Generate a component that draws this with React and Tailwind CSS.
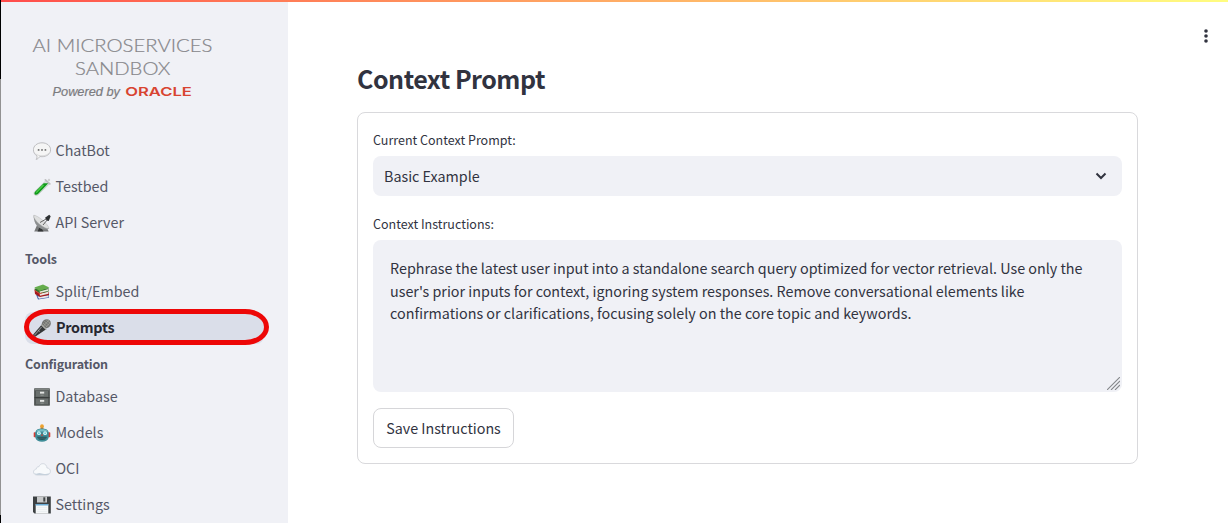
import React from "react";

function ChatIcon() {
  return (
    <svg viewBox="0 0 18 18" className="h-[18px] w-[18px] shrink-0">
      <path d="M9 .8c4.900 0 8.600 3.100 8.600 7s-3.700 6.900-8.600 6.900c-.8 0-1.500-.1-2.200-.2-.8 1.300-2 2.500-3.700 2.900.8-1.100 1-2.200.8-3.600C1.800 12.600.4 10.400.4 7.800.4 3.900 4.100.8 9 .8z" fill="#f5f5f5" stroke="#b0b0b2" strokeWidth=".8" />
      <path d="M2.500 11.500c1.500 1.700 4 2.300 6.500 2.300 3 0 5.800-1 7.200-3" fill="none" stroke="#d2d2d3" strokeWidth=".8" />
      <circle cx="5.600" cy="7.900" r=".95" fill="#6d6d6d" />
      <circle cx="9" cy="7.900" r=".95" fill="#6d6d6d" />
      <circle cx="12.400" cy="7.900" r=".95" fill="#6d6d6d" />
    </svg>
  );
}

function TubeIcon() {
  return (
    <svg viewBox="0 0 18 18" className="h-[18px] w-[18px] shrink-0">
      <path d="M12.700 2.800 16.400 5.900 5.200 16.700c-1.200.9-2.800 1-3.700.1-.8-.9-.7-2.300.4-3.400z" fill="#d5dfd9" stroke="#b4bbb8" strokeWidth=".5" />
      <path d="M10.700 5.200h4.600L5 16.100c-1.100.9-2.400 1-3.100.3-.7-.8-.5-1.900.4-3z" fill="#109a1b" />
      <path d="M10.500 7 3.200 14.700" stroke="#4ed04a" strokeWidth="1.200" />
      <path d="m12.400 1.900 4.400 4" stroke="#bdbdbf" strokeWidth="1.700" strokeLinecap="round" />
      <circle cx="16" cy="1.900" r="1.200" fill="#d0d0d2" />
    </svg>
  );
}

function DishIcon() {
  return (
    <svg viewBox="0 0 18 18" className="h-[18px] w-[18px] shrink-0">
      <path d="m5 9-3.800 8.500h14.500L12 10z" fill="#77797a" />
      <path d="m7 12-2.500 5.500h6z" fill="#343637" />
      <path d="M.8 1.300C.2 6.500 3 12.700 8 14.800c3 1.200 6.400.9 8-.4z" fill="#8d9091" />
      <path d="M.8 1.300c3-.7 15 9.200 15.200 13.100C12.500 16-.7 6 .8 1.300z" fill="#dedfdf" stroke="#aaa" strokeWidth=".4" />
      <path d="m7 8.500 7-4M10 11l5-6" stroke="#555" strokeWidth=".9" />
      <path d="m12 3.700 4.200-3 1.500 1.500-2 4.800-1.800-.5z" fill="#2d3032" />
    </svg>
  );
}

function BooksIcon() {
  return (
    <svg viewBox="0 0 18 18" className="h-[18px] w-[18px] shrink-0">
      <path d="m3 11.500 2 5 11-1.800v-3.200z" fill="#3d5ca7" />
      <path d="m4.500 13.500 11-1.300v2L6 15.800z" fill="#e9e9ec" />
      <path d="M1.500 6.500 2 11l5 3 9-2V9z" fill="#a5191d" />
      <path d="m6.600 10.500 8.900-1.800v2L7 12.700z" fill="#ece6e1" />
      <path d="M1.600 5.500 2 7.600l5 3.200 9-2.600-.4-3z" fill="#33702c" />
      <path d="m6.500 8.400 9-2.400v1.700L7 10z" fill="#e7eadd" />
      <path d="m1.300 4.400 8.700-3 6.300 3L6.700 8z" fill="#65ad4c" />
      <path d="m1.500 7.200 5.200 3.400 3-.8" fill="none" stroke="#ef5044" strokeWidth=".8" />
    </svg>
  );
}

function MicIcon() {
  return (
    <svg viewBox="0 0 18 18" className="h-[18px] w-[18px] shrink-0">
      <path d="M8.600 5.800 13.200 10.200 2.200 17.800.4 17.600l-.2-2z" fill="#353738" />
      <path d="M8.600 8 1.400 16.300" stroke="#85878a" strokeWidth="1.100" />
      <ellipse cx="13.300" cy="4.700" rx="4.800" ry="4.300" transform="rotate(-42 13.300 4.700)" fill="#737472" />
      <path d="m10 4 4.500 4M11.300 2.300l5 4.200M13.300 1.200l4 3M10.500 7l5.500-6M13 8l4.500-4.800" stroke="#b5b5ab" strokeWidth=".5" />
      <path d="m8.300 5.600 5.100 4.800" stroke="#acaca6" strokeWidth="1.400" />
      <path d="m5.400 11.600 1.100.8" stroke="#ddd" strokeWidth=".8" />
    </svg>
  );
}

function CabinetIcon() {
  return (
    <svg viewBox="0 0 18 18" className="h-[18px] w-[18px] shrink-0">
      <rect x="1.100" y=".3" width="15.800" height="17.400" rx=".6" fill="#505554" />
      <path d="M1.500 .8h15v1.500h-15z" fill="#7d8280" />
      <rect x="3" y="3" width="12" height="5.800" fill="#6a706e" />
      <rect x="3" y="10.500" width="12" height="5.800" fill="#6a706e" />
      <rect x="7" y="3.700" width="4.200" height="1.900" fill="#e4e6e5" />
      <rect x="7" y="11.900" width="4.200" height="1.900" fill="#e4e6e5" />
      <path d="M7.500 7.200h3.200M7.500 15.200h3.200" stroke="#9ca09e" strokeWidth=".7" />
      <path d="M1.500 9.600h15" stroke="#343837" strokeWidth=".9" />
    </svg>
  );
}

function RobotIcon() {
  return (
    <svg viewBox="0 0 18 18" className="h-[18px] w-[18px] shrink-0">
      <circle cx="9" cy="2.200" r="1.900" fill="#eda22f" />
      <path d="M7.500 3.600h3v2h-3z" fill="#b87e33" />
      <rect x=".7" y="8.300" width="2.300" height="5" rx=".8" fill="#d83d35" />
      <rect x="15" y="8.300" width="2.300" height="5" rx=".8" fill="#d83d35" />
      <path d="M2.300 8.200C3 5.700 5.400 4.600 9 4.600s6 1.100 6.700 3.600v5.300c-.7 2.900-3.400 4.200-6.700 4.200s-6-1.300-6.700-4.200z" fill="#3f8d98" />
      <path d="M3.300 7.400C4.400 5.600 6.500 5.200 9 5.200s4.600.4 5.700 2.200z" fill="#76bec7" />
      <circle cx="5.900" cy="9.200" r="1.900" fill="#d7f6f8" />
      <circle cx="12.100" cy="9.200" r="1.900" fill="#d7f6f8" />
      <circle cx="5.900" cy="9.200" r=".9" fill="#65c9d6" />
      <circle cx="12.100" cy="9.200" r=".9" fill="#65c9d6" />
      <path d="m9 9.500 1.100 2.200H7.900z" fill="#c34439" />
      <path d="M4.300 12.700h9.400c-.3 2.300-2 3.200-4.700 3.200s-4.400-.9-4.700-3.200z" fill="#1d454c" />
      <path d="M6 13.200v1.900M8 13.200v2.300M10 13.200v2.300M12 13.200v1.900" stroke="#6c9ca1" strokeWidth=".6" />
    </svg>
  );
}

function CloudIcon() {
  return (
    <svg viewBox="0 0 18 18" className="h-[18px] w-[18px] shrink-0">
      <path d="M4 15C2 15 .5 13.700.5 12S1.800 9.300 3.300 9.100C3.300 7.500 4.500 6.500 6 6.700 6.700 4.600 8.200 3.500 10.200 3.700c2.200.2 3.700 1.900 3.700 4.200 2 .1 3.500 1.500 3.500 3.400 0 2-1.400 3.500-3.600 3.700z" fill="#f7f9fb" stroke="#bfc8d1" strokeWidth=".6" />
      <path d="M1.200 13c1.800 1.300 4 .3 5.500.1 3 1.300 7.500.8 10-.2-.6 1.300-1.600 2-3 2.100H4c-1.300 0-2.300-.9-2.800-2z" fill="#c6d1dc" />
    </svg>
  );
}

function FloppyIcon() {
  return (
    <svg viewBox="0 0 18 18" className="h-[18px] w-[18px] shrink-0">
      <path d="M0 .5h17.800v17.100H1.500L0 16z" fill="#3c4042" />
      <path d="M4 .5h10v6H4z" fill="#c8cacb" />
      <path d="M10.300 1.300h2v4.300h-2z" fill="#414547" />
      <path d="M2.700 8h12.600v9.600H2.700z" fill="#f5f7f8" />
      <path d="M2.700 8h12.600v1.500H2.700z" fill="#6aabd4" />
      <path d="M4 11.500h10M4 13.500h10M4 15.500h10" stroke="#e6ebee" strokeWidth=".6" />
    </svg>
  );
}

function NavItem({ icon, label, active }) {
  return (
    <div className={active ? "relative flex h-8 items-center gap-1 rounded-lg bg-[#dadee9] pl-2 text-[#262730]" : "flex h-8 items-center gap-1 pl-2 text-[#555867]"}>
      {icon}
      <span className={active ? "pb-0.5 pl-px text-[14.320px] font-bold tracking-[-0.26px] whitespace-nowrap" : "pb-0.5 pl-[0.500px] text-[14.320px] whitespace-nowrap"}>{label}</span>
      {active && <div className="absolute -top-[3px] -left-px h-9 w-[245px] rounded-[24px/18px] border-[5px] border-[#ed0707]" />}
    </div>
  );
}

function Logo() {
  return (
    <svg width="182" height="68" viewBox="0 0 182 68" className="ml-[31px] block">
      <g fill="#858589" stroke="#858589" strokeWidth=".2" fontFamily="Lato, sans-serif" fontWeight="300">
        <text x=".5" y="18" fontSize="18.500" textLength="180" lengthAdjust="spacingAndGlyphs">AI MICROSERVICES</text>
        <text x="43" y="41" fontSize="18.500" textLength="95.500" lengthAdjust="spacingAndGlyphs">SANDBOX</text>
      </g>
      <text x="20.500" y="62" fontSize="12.500" fill="#7c7c7f" stroke="#7c7c7f" strokeWidth=".2" fontStyle="italic" fontFamily="Liberation Sans, sans-serif" textLength="67.500" lengthAdjust="spacingAndGlyphs">Powered by</text>
      <text x="93.300" y="62" fontSize="12.300" fill="#d84431" fontWeight="600" fontFamily="Inter, sans-serif" textLength="66.500" lengthAdjust="spacingAndGlyphs">ORACLE</text>
    </svg>
  );
}

export default function App() {
  return (
    <div className="flex h-[523px] w-[1228px] flex-col overflow-hidden bg-white font-['Noto_Sans_CJK_SC',sans-serif] text-[#31333f]">
      <div className="flex h-0.5 shrink-0">
        <div className="w-px bg-black" />
        <div className="flex-1 bg-linear-to-r from-[#ff4b4b] to-[#fffd80]" />
      </div>
      <div className="flex min-h-0 flex-1">
        <div className="flex w-px shrink-0 flex-col">
          <div className="h-[77px] bg-black" />
          <div className="flex-1 bg-[#929292]" />
          <div className="h-2 bg-black" />
        </div>
        <aside className="w-[287px] shrink-0 overflow-hidden bg-[#f0f1f6] pt-8">
          <Logo />
          <nav className="ml-6 w-[239px] pt-[33px]">
            <div className="flex flex-col gap-1">
              <NavItem icon={<ChatIcon />} label="ChatBot" />
              <NavItem icon={<TubeIcon />} label="Testbed" />
              <NavItem icon={<DishIcon />} label="API Server" />
            </div>
            <div className="flex h-[37px] items-center pt-1 text-[12.500px] font-bold tracking-[-0.16px] text-[#555867]">Tools</div>
            <div className="flex flex-col gap-1">
              <NavItem icon={<BooksIcon />} label="Split/Embed" />
              <NavItem icon={<MicIcon />} label="Prompts" active />
            </div>
            <div className="flex h-[37px] items-center pt-1 text-[12.500px] font-bold tracking-[-0.16px] text-[#555867]">Configuration</div>
            <div className="flex flex-col gap-1">
              <NavItem icon={<CabinetIcon />} label="Database" />
              <NavItem icon={<RobotIcon />} label="Models" />
              <NavItem icon={<CloudIcon />} label="OCI" />
              <NavItem icon={<FloppyIcon />} label="Settings" />
            </div>
          </nav>
        </aside>
        <main className="flex min-w-0 flex-1 justify-between pr-[18px] pl-[69px]">
          <section className="w-[781px] pt-[57px]">
            <h1 className="flex h-10 items-center text-[25px] font-bold tracking-[-0.480px]">Context Prompt</h1>
            <div className="mt-[13px] h-[352px] rounded-lg border border-[#d9d9dc] px-[15px] pt-[17px]">
              <label className="flex h-5 items-center text-[12.500px]">Current Context Prompt:</label>
              <div className="mt-1.5 flex h-10 items-center justify-between rounded-lg bg-[#f0f1f6] pr-[15px] pl-[11px]">
                <span className="text-[14.320px]">Basic Example</span>
                <svg width="12" height="8" viewBox="0 0 12 8" fill="none"><path d="m1.500 1.500 4.500 4.500 4.500-4.500" stroke="#31333f" strokeWidth="2" /></svg>
              </div>
              <label className="mt-[18px] flex h-5 items-center text-[12.500px]">Context Instructions:</label>
              <div className="mt-1.5 flex h-[152px] justify-between rounded-lg bg-[#f0f1f6] pt-[17px] pr-0.5 pb-0.5 pl-[17px] text-[14.330px] leading-[22.500px]">
                <p className="whitespace-nowrap">
                  Rephrase the latest user input into a standalone search query optimized for vector retrieval. Use only the<br />
                  user's prior inputs for context, ignoring system responses. Remove conversational elements like<br />
                  confirmations or clarifications, focusing solely on the core topic and keywords.
                </p>
                <svg width="13" height="13" viewBox="0 0 13 13" className="self-end" stroke="#85878b" strokeWidth="1.100"><path d="M0 13 13 0M4 13l9-9M8 13l5-5" /></svg>
              </div>
              <button className="mt-4 flex h-10 w-[141px] items-center justify-center rounded-lg border border-[#d6d6d9] text-[14.320px]">Save Instructions</button>
            </div>
          </section>
          <svg width="8" height="16" viewBox="0 0 8 16" className="mt-[26px]" fill="#31333f">
            <circle cx="4" cy="3" r="1.800" />
            <circle cx="4" cy="8" r="1.800" />
            <circle cx="4" cy="13" r="1.800" />
          </svg>
        </main>
      </div>
    </div>
  );
}
